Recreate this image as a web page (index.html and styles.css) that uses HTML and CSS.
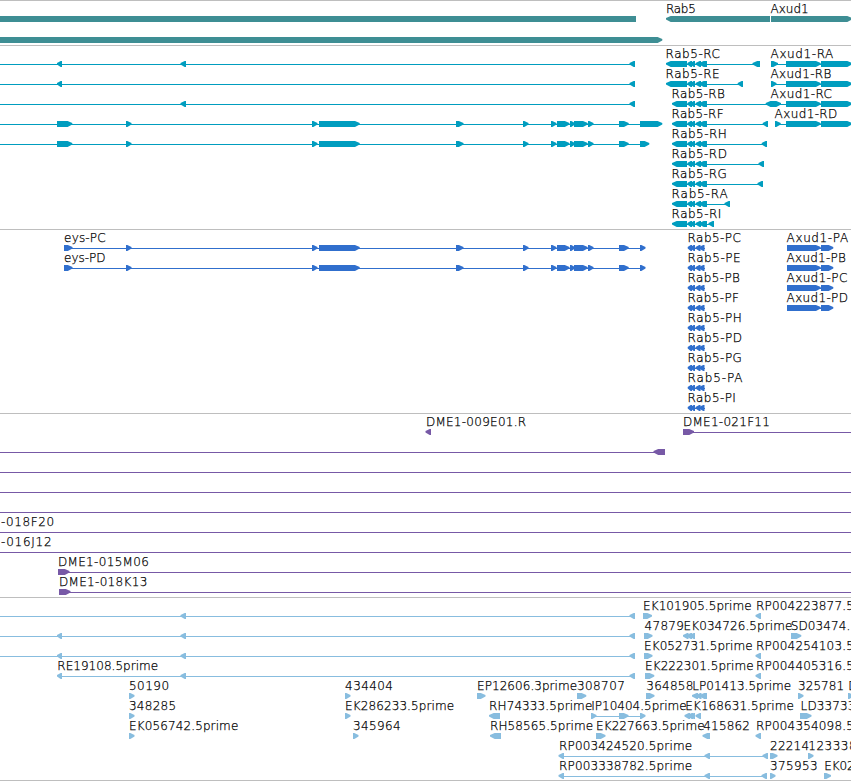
FILE: index.html
```html
<!DOCTYPE html>
<html lang="en">
<head>
<meta charset="utf-8">
<title>Genome tracks</title>
<link rel="stylesheet" href="styles.css">
</head>
<body>
<main class="browser" id="browser"></main>
<script src="tracks.js"></script>
</body>
</html>
```
FILE: styles.css
```css
body {
  margin: 0;
  background: #fff;
  overflow: hidden;
}

.browser {
  display: flex;
  flex-direction: column;
  width: 851px;
  height: 781px;
  border-bottom: 1px solid #bebebe;
  box-sizing: border-box;
  overflow: hidden;
}

.track {
  box-sizing: border-box;
  flex: none;
  height: 184px;
  border-top: 1px solid #bebebe;
}

.row {
  display: block;
  width: 851px;
  height: 20px;
  overflow: visible;
  fill: currentColor;
}

.label {
  fill: #000;
  stroke: #000;
  stroke-width: 0.25px;
  font-family: "DejaVu Sans", sans-serif;
  font-weight: 200;
  font-size: 12px;
}

.genes { height: 45px; color: #3e8e94; }
.genes .row { height: 21px; }
.transcripts { color: #009dbf; }
.proteins { color: #306fcd; }
.clones { color: #7759a6; }
.reads { height: 183px; color: #88bddf; }
```
FILE: tracks.js
```js
// Each row: t = labels [text, left, right], l = connector lines,
// f = forward arrows, b = backward arrows, r = plain blocks.
const exons = [[126, 131.5], [312, 317.5], [319, 359.7], [456, 463.5], [523, 528.5],
  [551, 556.5], [557, 569.5], [570, 575], [574, 587.7], [588, 593.5], [619, 628.7]];
const cds = [[687.7, 692], [690.5, 695], [695.5, 700.5], [699, 704.5]];
const rabCds = [[687.3, 692], [690.5, 695], [695.5, 701], [699, 707]];

function rab(name, x, right, tail, end) {
  return { t: [[name, x, right]], l: [[x + 4, end]], b: [[x, 687], ...rabCds, [tail, end]] };
}
function axud(name, x, right, tip, start) {
  return { t: [[name, x, right]], l: [[start || x, 851]], f: [[x, tip], [786, 820.7], [821, 852]] };
}
function merge(...parts) {
  const row = {};
  for (const part of parts)
    for (const key in part) row[key] = (row[key] || []).concat(part[key]);
  return row;
}
const rabProtein = (name, right) => ({ t: [[name, 688, right]], l: [[690, 705]], b: cds });
const axudProtein = (name, right) => ({ t: [[name, 787, right]], l: [[787, 830]], f: [[787, 820.7], [821, 833.3]] });
const eysProtein = name => ({ t: [[name, 64.5, 105]], l: [[64, 642]], f: [[64, 72.5], ...exons, [640, 645.5]] });
const A = [57, 62], B = [180.5, 186], C = [629.5, 635];
const full = { l: [[0, 851]] };

const tracks = {
  genes: [
    { t: [["Rab5", 666.3, 695.3], ["Axud1", 771, 808]], r: [[0, 636]], b: [[666, 770]], f: [[771, 852]] },
    { f: [[0, 662.3]] }
  ],
  transcripts: [
    merge({ l: [[0, 634]], b: [A, B, C] }, rab("Rab5-RC", 666, 719.3, 752.5, 760), axud("Axud1-RA", 771, 832.7, 778)),
    merge({ l: [[0, 634]], b: [A, C] }, rab("Rab5-RE", 666, 719, 737.7, 743), axud("Axud1-RB", 771, 830.7, 776.5)),
    merge({ l: [[0, 634]], b: [B, C] }, rab("Rab5-RB", 672, 724.3, 765.7, 775), axud("Axud1-RC", 771, 831.3, 781)),
    merge({ l: [[0, 658]], f: [[57, 72.3], ...exons, [640, 662.3]] }, rab("Rab5-RF", 672, 723, 762.7, 768), axud("Axud1-RD", 775, 836.7, 780.7)),
    merge({ l: [[0, 645]], f: [[57, 72.3], ...exons, [640, 649.3]] }, rab("Rab5-RH", 672, 726.3, 761.7, 767)),
    rab("Rab5-RD", 672, 726.3, 758.5, 764),
    rab("Rab5-RG", 672, 726.3, 757.5, 763),
    rab("Rab5-RA", 672, 727, 724.5, 730),
    rab("Rab5-RI", 672, 720.7, 708.5, 714)
  ],
  proteins: [
    merge(eysProtein("eys-PC"), rabProtein("Rab5-PC", 740.3), axudProtein("Axud1-PA", 847.5)),
    merge(eysProtein("eys-PD"), rabProtein("Rab5-PE", 740), axudProtein("Axud1-PB", 845.3)),
    merge(rabProtein("Rab5-PB", 739.3), axudProtein("Axud1-PC", 846.7)),
    merge(rabProtein("Rab5-PF", 738.3), axudProtein("Axud1-PD", 847.3)),
    rabProtein("Rab5-PH", 741.3),
    rabProtein("Rab5-PD", 741.3),
    rabProtein("Rab5-PG", 741.3),
    rabProtein("Rab5-PA", 741.9),
    rabProtein("Rab5-PI", 735.3)
  ],
  clones: [
    { t: [["DME1-009E01.R", 426.3, 525.5], ["DME1-021F11", 683.3, 769.3]], l: [[683, 851]], b: [[425.5, 431]], f: [[683, 694]] },
    { l: [[0, 662]], b: [[653.5, 665]] },
    full, full, full,
    { t: [["-018F20", 1.5, 53.5]], l: [[0, 851]] },
    { t: [["-016J12", 1.5, 51]], l: [[0, 851]] },
    { t: [["DME1-015M06", 58.3, 148.3]], l: [[58, 851]], f: [[58, 69.5]] },
    { t: [["DME1-018K13", 59.3, 146.7]], l: [[59, 851]], f: [[59, 70.5]] }
  ],
  reads: [
    { t: [["EK101905.5prime", 643.5, 751], ["RP004223877.5prime", 756.5, 889]], l: [[0, 634]], b: [B, C, [755.5, 761]], f: [[643, 652]] },
    { t: [["47879", 645, 683.3], ["EK034726.5prime", 684, 791.7], ["SD03474.5prime", 791.2, 893]], l: [[0, 634]], b: [A, B, C, [683, 688.5], [686.5, 692], [689.5, 695]], f: [[644, 652.5], [791, 801.3]] },
    { t: [["EK052731.5prime", 644.5, 752], ["RP004254103.5prime", 756.5, 889]], l: [[0, 635]], b: [A, B, C, [755.5, 761]], f: [[644, 652.5]] },
    { t: [["RE19108.5prime", 57.7, 157.5], ["EK222301.5prime", 645.5, 753], ["RP004405316.5prime", 756.5, 889]], l: [[60, 634]], b: [A, B, C, [755.5, 761]], f: [[645, 654.3]] },
    { t: [["50190", 129.3, 168.5], ["434404", 345.5, 392.3], ["EP12606.3prime", 477.5, 576.5], ["308707", 577.3, 624.3], ["364858", 646.7, 692.7], ["LP01413.5prime", 692.7, 790.5], ["325781", 798.5, 843.5], ["D", 848.7, 857]], b: [[692, 698], [696, 701.5], [699.5, 707]], f: [[129, 134.5], [345, 350.5], [477, 485.5], [577, 586.3], [646, 654.5], [798, 803.5], [848, 853.5]] },
    { t: [["348285", 129.3, 175.5], ["EK286233.5prime", 345.5, 453.5], ["RH74333.5prime", 489.5, 591.7], ["IP10404.5prime", 591.7, 686], ["EK168631.5prime", 685.7, 793.3], ["LD33733.5prime", 801, 902]], l: [[591, 643]], b: [[489, 500], [684.5, 690], [687.5, 693], [690, 695], [695.5, 701]], f: [[129, 134.5], [345, 350.5], [591, 596.5], [619, 628.5], [640, 645.5], [800, 811.5]] },
    { t: [["EK056742.5prime", 129.5, 237.7], ["345964", 353.3, 400], ["RH58565.5prime", 490.5, 592.5], ["EK227663.5prime", 596.5, 704], ["415862", 703.7, 749.3], ["RP004354098.5prime", 756.5, 889]], b: [[490, 501], [702.5, 710], [755.5, 761]], f: [[129, 134.5], [353, 358.5], [596, 605.5]] },
    { t: [["RP003424520.5prime", 559.5, 691.5], ["22214", 770.5, 808.5], ["123338", 808.7, 856]], l: [[562, 765]], b: [[558.5, 564], [704.5, 710], [762.5, 768]], f: [[770, 777.5], [808, 813.5]] },
    { t: [["RP003338782.5prime", 559.5, 691.5], ["375953", 770.5, 817], ["EK02", 824.7, 854]], l: [[562, 765]], b: [[558.5, 564], [704.5, 710], [761.5, 767]], f: [[770, 775.5], [824, 831]] }
  ]
};

function drawRow(row) {
  const out = [];
  for (const [a, b] of row.l || []) out.push(`<rect x="${a}" y="18" width="${b - a}" height="1"/>`);
  for (const [a, b] of row.r || []) out.push(`<rect x="${a}" y="15" width="${b - a}" height="6"/>`);
  for (const [a, b] of row.f || []) {
    const s = Math.max(a, b - 6);
    out.push(`<path d="M${a} 15H${s + 1.3}L${b} 17V18.6L${s + 1.3} 21H${a}Z"/>`);
  }
  for (const [a, b] of row.b || []) {
    const s = Math.min(b, a + 6);
    out.push(`<path d="M${b} 15H${s - 1.3}L${a} 17V18.6L${s - 1.3} 21H${b}Z"/>`);
  }
  for (const [text, a, b] of row.t || [])
    out.push(`<text class="label" x="${a - 0.4}" y="12" textLength="${b - a + 1}">${text}</text>`);
  return `<svg class="row">${out.join("")}</svg>`;
}

document.getElementById("browser").innerHTML = Object.entries(tracks)
  .map(([name, rows]) => `<section class="track ${name}">${rows.map(drawRow).join("")}</section>`)
  .join("");
```
